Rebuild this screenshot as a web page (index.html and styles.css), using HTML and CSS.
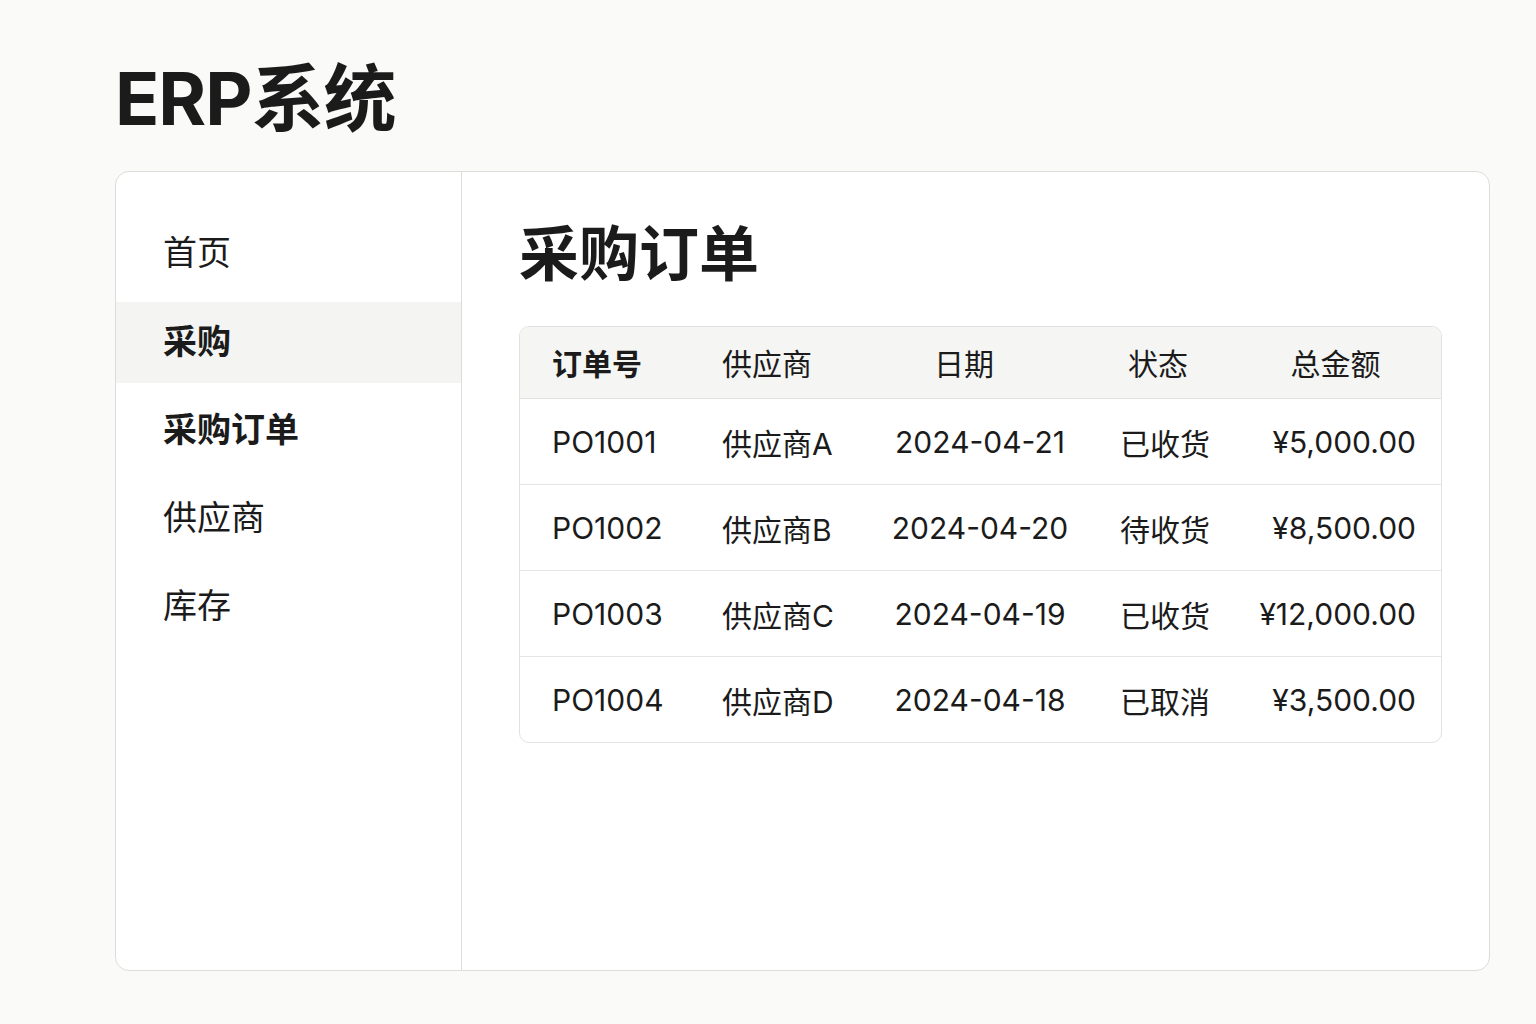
FILE: index.html
```html
<!DOCTYPE html>
<html lang="zh-CN">

<head>
  <meta charset="UTF-8">
  <meta name="viewport" content="width=device-width, initial-scale=1.0">
  <title>ERP系统</title>
  <link rel="stylesheet" href="styles.css">
</head>

<body>
  <div class="page">
    <h1 class="brand">ERP系统</h1>
    <div class="card">
      <nav class="sidebar">
        <div class="nav-item">首页</div>
        <div class="nav-item active">采购</div>
        <div class="nav-item strong">采购订单</div>
        <div class="nav-item">供应商</div>
        <div class="nav-item">库存</div>
      </nav>
      <main class="content">
        <h2 class="content-title">采购订单</h2>
        <div class="table-wrap">
          <table class="orders">
            <colgroup>
              <col class="c-no">
              <col class="c-sup">
              <col class="c-date">
              <col class="c-status">
              <col class="c-amount">
            </colgroup>
            <thead>
              <tr>
                <th class="first">订单号</th>
                <th>供应商</th>
                <th class="center date-head">日期</th>
                <th class="center status-head">状态</th>
                <th class="center">总金额</th>
              </tr>
            </thead>
            <tbody>
              <tr>
                <td>PO1001</td>
                <td>供应商A</td>
                <td class="center">2024-04-21</td>
                <td class="center">已收货</td>
                <td class="amount">¥5,000.00</td>
              </tr>
              <tr>
                <td>PO1002</td>
                <td>供应商B</td>
                <td class="center">2024-04-20</td>
                <td class="center">待收货</td>
                <td class="amount">¥8,500.00</td>
              </tr>
              <tr>
                <td>PO1003</td>
                <td>供应商C</td>
                <td class="center">2024-04-19</td>
                <td class="center">已收货</td>
                <td class="amount">¥12,000.00</td>
              </tr>
              <tr>
                <td>PO1004</td>
                <td>供应商D</td>
                <td class="center">2024-04-18</td>
                <td class="center">已取消</td>
                <td class="amount">¥3,500.00</td>
              </tr>
            </tbody>
          </table>
        </div>
      </main>
    </div>
  </div>
</body>

</html>
```

FILE: styles.css
```css
html,
body {
  margin: 0;
  padding: 0;
  height: 100%;
}

body {
  background: #fafaf8;
  color: #1b1b1b;
  font-family: Inter, "Noto Sans CJK SC", sans-serif;
}

.page {
  padding: 52px 46px 0 115px;
}

.brand {
  margin: 0;
  font-size: 73px;
  font-weight: 700;
  line-height: 94px;
  letter-spacing: -1px;
}

.card {
  display: flex;
  margin-top: 25px;
  height: 798px;
  background: #fff;
  border: 1px solid #dcdcda;
  border-radius: 14px;
  overflow: hidden;
}

.sidebar {
  width: 345px;
  padding-top: 41px;
  border-right: 1px solid #dcdcda;
  display: flex;
  flex-direction: column;
  gap: 7px;
}

.nav-item {
  height: 81px;
  line-height: 79px;
  padding-left: 47px;
  font-size: 34px;
}

.nav-item.active {
  background: #f4f4f3;
  font-weight: 700;
  margin-top: 1px;
}

.nav-item.strong {
  font-weight: 700;
}

.content {
  flex: 1;
  padding: 40px 47px 0 57px;
}

.content-title {
  margin: 0 0 30px;
  font-size: 60px;
  font-weight: 700;
  line-height: 84px;
}

.table-wrap {
  border: 1px solid #e2e2e0;
  border-radius: 10px;
  overflow: hidden;
}

.orders {
  width: 100%;
  border-collapse: collapse;
  table-layout: fixed;
  font-size: 30px;
}

.c-no {
  width: 170px;
}

.c-sup {
  width: 170px;
}

.c-date {
  width: 240px;
}

.c-status {
  width: 130px;
}

.orders th {
  height: 69px;
  background: #f5f5f3;
  font-weight: 400;
  text-align: left;
  padding: 0 0 2px 32px;
  border-bottom: 1px solid #e2e2e0;
}

.orders th.first {
  font-weight: 700;
}

.orders td {
  height: 85px;
  padding: 0 0 0 32px;
  border-top: 1px solid #e6e6e4;
  white-space: nowrap;
}

.orders tbody tr:first-child td {
  border-top: none;
}

.orders .center {
  text-align: center;
  padding-left: 0;
}

.orders th.date-head {
  padding-right: 32px;
}

.orders th.status-head {
  padding-right: 14px;
}

.orders td.amount {
  text-align: right;
  padding: 0 25px 0 0;
}
```
